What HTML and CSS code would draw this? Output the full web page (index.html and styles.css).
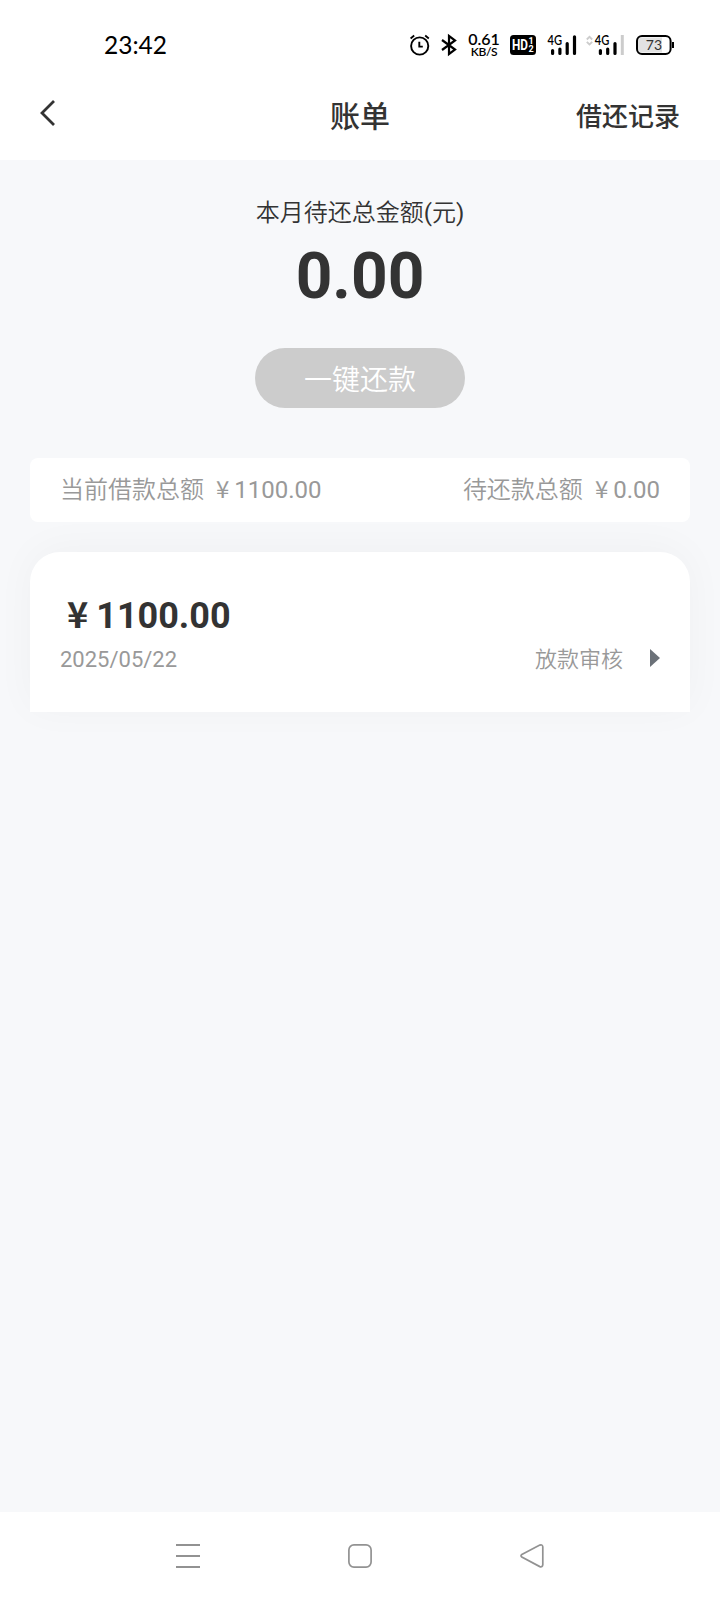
FILE: index.html
```html
<!DOCTYPE html>
<html lang="zh-CN">
    <head>
        <meta charset="UTF-8">
        <meta name="viewport" content="width=device-width, initial-scale=1.0">
        <title>账单</title>
        <link rel="stylesheet" href="styles.css">
    </head>
    <body>
        <div class="status-bar">
            <span class="clock">23:42</span>
            <div class="status-icons">
                <svg class="alarm" width="20" height="22" viewBox="0 0 20 22" fill="none" stroke="#000" stroke-width="1.9">
                    <circle cx="9.7" cy="11" r="8.6"/>
                    <path d="M9.3 6.8V11.6H12.8M0.6 3.4L4.2 0.6M15.2 0.6L18.8 3.4"/>
                </svg>
                <svg class="bluetooth" width="16" height="22" viewBox="0 0 16 22" fill="none" stroke="#000" stroke-width="2.2">
                    <path d="M1 6L14 15.6L8 20V2L14 6.4L1 16"/>
                </svg>
                <div class="speed">
                    <span class="speed-num">0.61</span>
                    <span class="speed-unit">KB/S</span>
                </div>
                <svg class="hd" width="26" height="20" viewBox="0 0 26 20">
                    <rect width="26" height="20" rx="3.5" fill="#000"/>
                    <text x="2" y="15" class="hd-text" textLength="16" lengthAdjust="spacingAndGlyphs">HD</text>
                    <text x="18.5" y="9.3" class="hd-small">1</text>
                    <text x="18.5" y="17.2" class="hd-small">2</text>
                </svg>
                <svg class="signal" width="30" height="22" viewBox="0 0 30 22">
                    <text x="0.5" y="10.3" class="net" textLength="14.5" lengthAdjust="spacingAndGlyphs">4G</text>
                    <g stroke="#000" stroke-width="3.2" stroke-linecap="round">
                        <path d="M5.6 15.5V18.4M12.9 14V18.4M20.2 8.6V18.4M27.5 1.8V18.4"/>
                    </g>
                </svg>
                <svg class="signal-two" width="38" height="22" viewBox="0 0 38 22">
                    <path d="M0.8 4.5L3.5 1.8L6.2 4.5M0.8 6.8L3.5 9.5L6.2 6.8" fill="none" stroke="#ccc" stroke-width="1.8"/>
                    <text x="8.8" y="10.3" class="net" textLength="14.5" lengthAdjust="spacingAndGlyphs">4G</text>
                    <g stroke="#000" stroke-width="3.2" stroke-linecap="round">
                        <path d="M14.4 15.5V18.4M21.7 14V18.4M29 8.6V18.4"/>
                    </g>
                    <path d="M36.3 0V20" stroke="#ccc" stroke-width="3"/>
                </svg>
                <svg class="battery" width="39" height="20" viewBox="0 0 39 20">
                    <path d="M5 2.5H26V17.5H5Q2 17 2 13V7Q2 3 5 2.5Z" fill="#e2e2e2"/>
                    <rect x="1" y="1" width="33.6" height="18" rx="5" fill="none" stroke="#000" stroke-width="2"/>
                    <rect x="36" y="7" width="2" height="6" fill="#000"/>
                    <text x="9.8" y="15" class="battery-text">73</text>
                </svg>
            </div>
        </div>

        <div class="header">
            <svg class="back" width="16" height="26" viewBox="0 0 16 26" fill="none" stroke="#333" stroke-width="2.8">
                <path d="M14 1L2 13L14 25"/>
            </svg>
            <h1>账单</h1>
            <a class="record">借还记录</a>
        </div>

        <div class="content">
            <p class="total-label">本月待还总金额<b>(</b>元<b>)</b></p>
            <p class="total">0.00</p>
            <button type="button" class="repay">一键还款</button>

            <div class="summary">
                <span>当前借款总额<b><i class="yen">¥</i>1100.00</b></span>
                <span>待还款总额<b><i class="yen">¥</i>0.00</b></span>
            </div>

            <div class="bill">
                <p class="amount"><i class="yen">¥</i>1100.00</p>
                <div class="bill-info">
                    <span>2025/05/22</span>
                    <span class="state">放款审核<i class="arrow"></i></span>
                </div>
            </div>
        </div>

        <div class="nav-bar">
            <svg width="24" height="24" viewBox="0 0 24 24" stroke="#929292" stroke-width="2">
                <path d="M0 1H24M0 12H24M0 23H24"/>
            </svg>
            <svg width="24" height="24" viewBox="0 0 24 24" fill="none" stroke="#929292" stroke-width="1.7">
                <rect x="0.9" y="0.9" width="22.2" height="22.2" rx="5"/>
            </svg>
            <svg width="24" height="24" viewBox="0 0 24 24" fill="none" stroke="#929292" stroke-width="1.7">
                <path d="M1.8 10.5L19.8 1.1Q22.6 0.3 22.8 2.8V20.6Q22.6 23.4 19.8 22.6L1.8 13.1Q0.2 11.8 1.8 10.5Z"/>
            </svg>
        </div>
    </body>
</html>
```
FILE: styles.css
```css
*{
    box-sizing: border-box;
}
body{
    display: flex;
    flex-direction: column;
    height: 1600px;
    margin: 0;
    background-color: #fff;
    color: #333;
    font-family: Roboto, "Noto Sans CJK SC", sans-serif;
}
p, h1{
    margin: 0;
}
svg{
    display: block;
    flex: none;
    overflow: visible;
}

/* status bar */
.status-bar{
    display: flex;
    justify-content: space-between;
    height: 80px;
    padding: 0 45px 0 104px;
    color: #000;
}
.clock{
    margin-top: 30px;
    font-family: Lato, sans-serif;
    font-size: 24.5px;
    line-height: 30px;
}
.status-icons{
    display: flex;
    align-items: flex-start;
    padding-top: 35px;
}
.bluetooth{
    margin-left: 11px;
    margin-top: -1px;
}
.speed{
    display: flex;
    flex-direction: column;
    align-items: center;
    width: 32px;
    margin-left: 11px;
    margin-top: -3px;
    font-family: Lato, sans-serif;
    font-weight: 600;
}
.speed-num{
    font-size: 16px;
    line-height: 14px;
}
.speed-unit{
    font-size: 12px;
    letter-spacing: -0.4px;
    line-height: 12px;
}
.hd{
    margin-left: 10px;
}
.hd-text{
    fill: #fff;
    font: bold 14px Roboto, sans-serif;
}
.hd-small{
    fill: #fff;
    font: bold 9px Roboto, sans-serif;
}
.signal{
    margin-left: 11px;
}
.signal-two{
    margin-left: 9px;
}
.net{
    font: 600 13px Lato, sans-serif;
}
.battery{
    margin-left: 12px;
}
.battery-text{
    fill: #333;
    font: 14px Lato, sans-serif;
}

/* title */
.header{
    display: grid;
    grid-template-columns: 1fr auto 1fr;
    align-items: center;
    height: 80px;
    padding: 0 40px;
}
.back{
    margin-top: -14px;
}
.header h1{
    margin-top: -7px;
    font-size: 30px;
    font-weight: 500;
    line-height: 40px;
}
.record{
    margin-top: -7px;
    justify-self: end;
    font-size: 26px;
    font-weight: 500;
    line-height: 36px;
}

.content{
    display: flex;
    flex: 1;
    flex-direction: column;
    align-items: center;
    padding: 35px 30px 0;
    background-color: #f7f8fa;
}
.total-label{
    font-size: 24px;
    font-weight: 350;
    line-height: 36px;
}
.total-label b{
    font-weight: normal;
}
.total{
    margin-top: 8px;
    font-size: 64px;
    font-weight: bold;
    line-height: 76px;
}
.repay{
    width: 210px;
    height: 60px;
    margin-top: 33px;
    padding: 0 0 1px;
    border: 0;
    border-radius: 30px;
    background-color: #ccc;
    color: #fff;
    font-family: inherit;
    font-size: 28px;
    font-weight: 350;
}
.summary{
    display: flex;
    justify-content: space-between;
    width: 100%;
    height: 64px;
    margin-top: 50px;
    padding: 0 30px;
    border-radius: 8px;
    background-color: #fff;
    color: #999;
    font-size: 24px;
    font-weight: 350;
    line-height: 64px;
    position: relative;
    z-index: 1;
}
.summary b{
    font-weight: normal;
}
.yen{
    margin-left: 12px;
    margin-right: 5px;
    font-family: "Noto Sans CJK SC", sans-serif;
    font-style: normal;
    line-height: 1;
}
.bill{
    width: 100%;
    height: 160px;
    margin-top: 30px;
    padding: 40px 30px 0;
    border-radius: 30px 30px 0 0;
    background-color: #fff;
    box-shadow: 0 -4px 40px rgba(0, 0, 0, 0.035);
}
.amount{
    font-size: 36px;
    font-weight: bold;
    line-height: 48px;
}
.amount .yen{
    margin-left: 7px;
    margin-right: 8px;
}
.bill-info{
    display: flex;
    justify-content: space-between;
    color: #999;
    font-size: 22px;
    line-height: 40px;
}
.state{
    display: flex;
    align-items: center;
    font-weight: 350;
}
.arrow{
    margin-left: 27px;
    margin-top: -4px;
    border-left: 10px solid #6b7178;
    border-top: 9px solid transparent;
    border-bottom: 9px solid transparent;
}

/* system navigation */
.nav-bar{
    display: flex;
    justify-content: space-between;
    align-items: center;
    height: 88px;
    padding: 0 176px;
}
```
